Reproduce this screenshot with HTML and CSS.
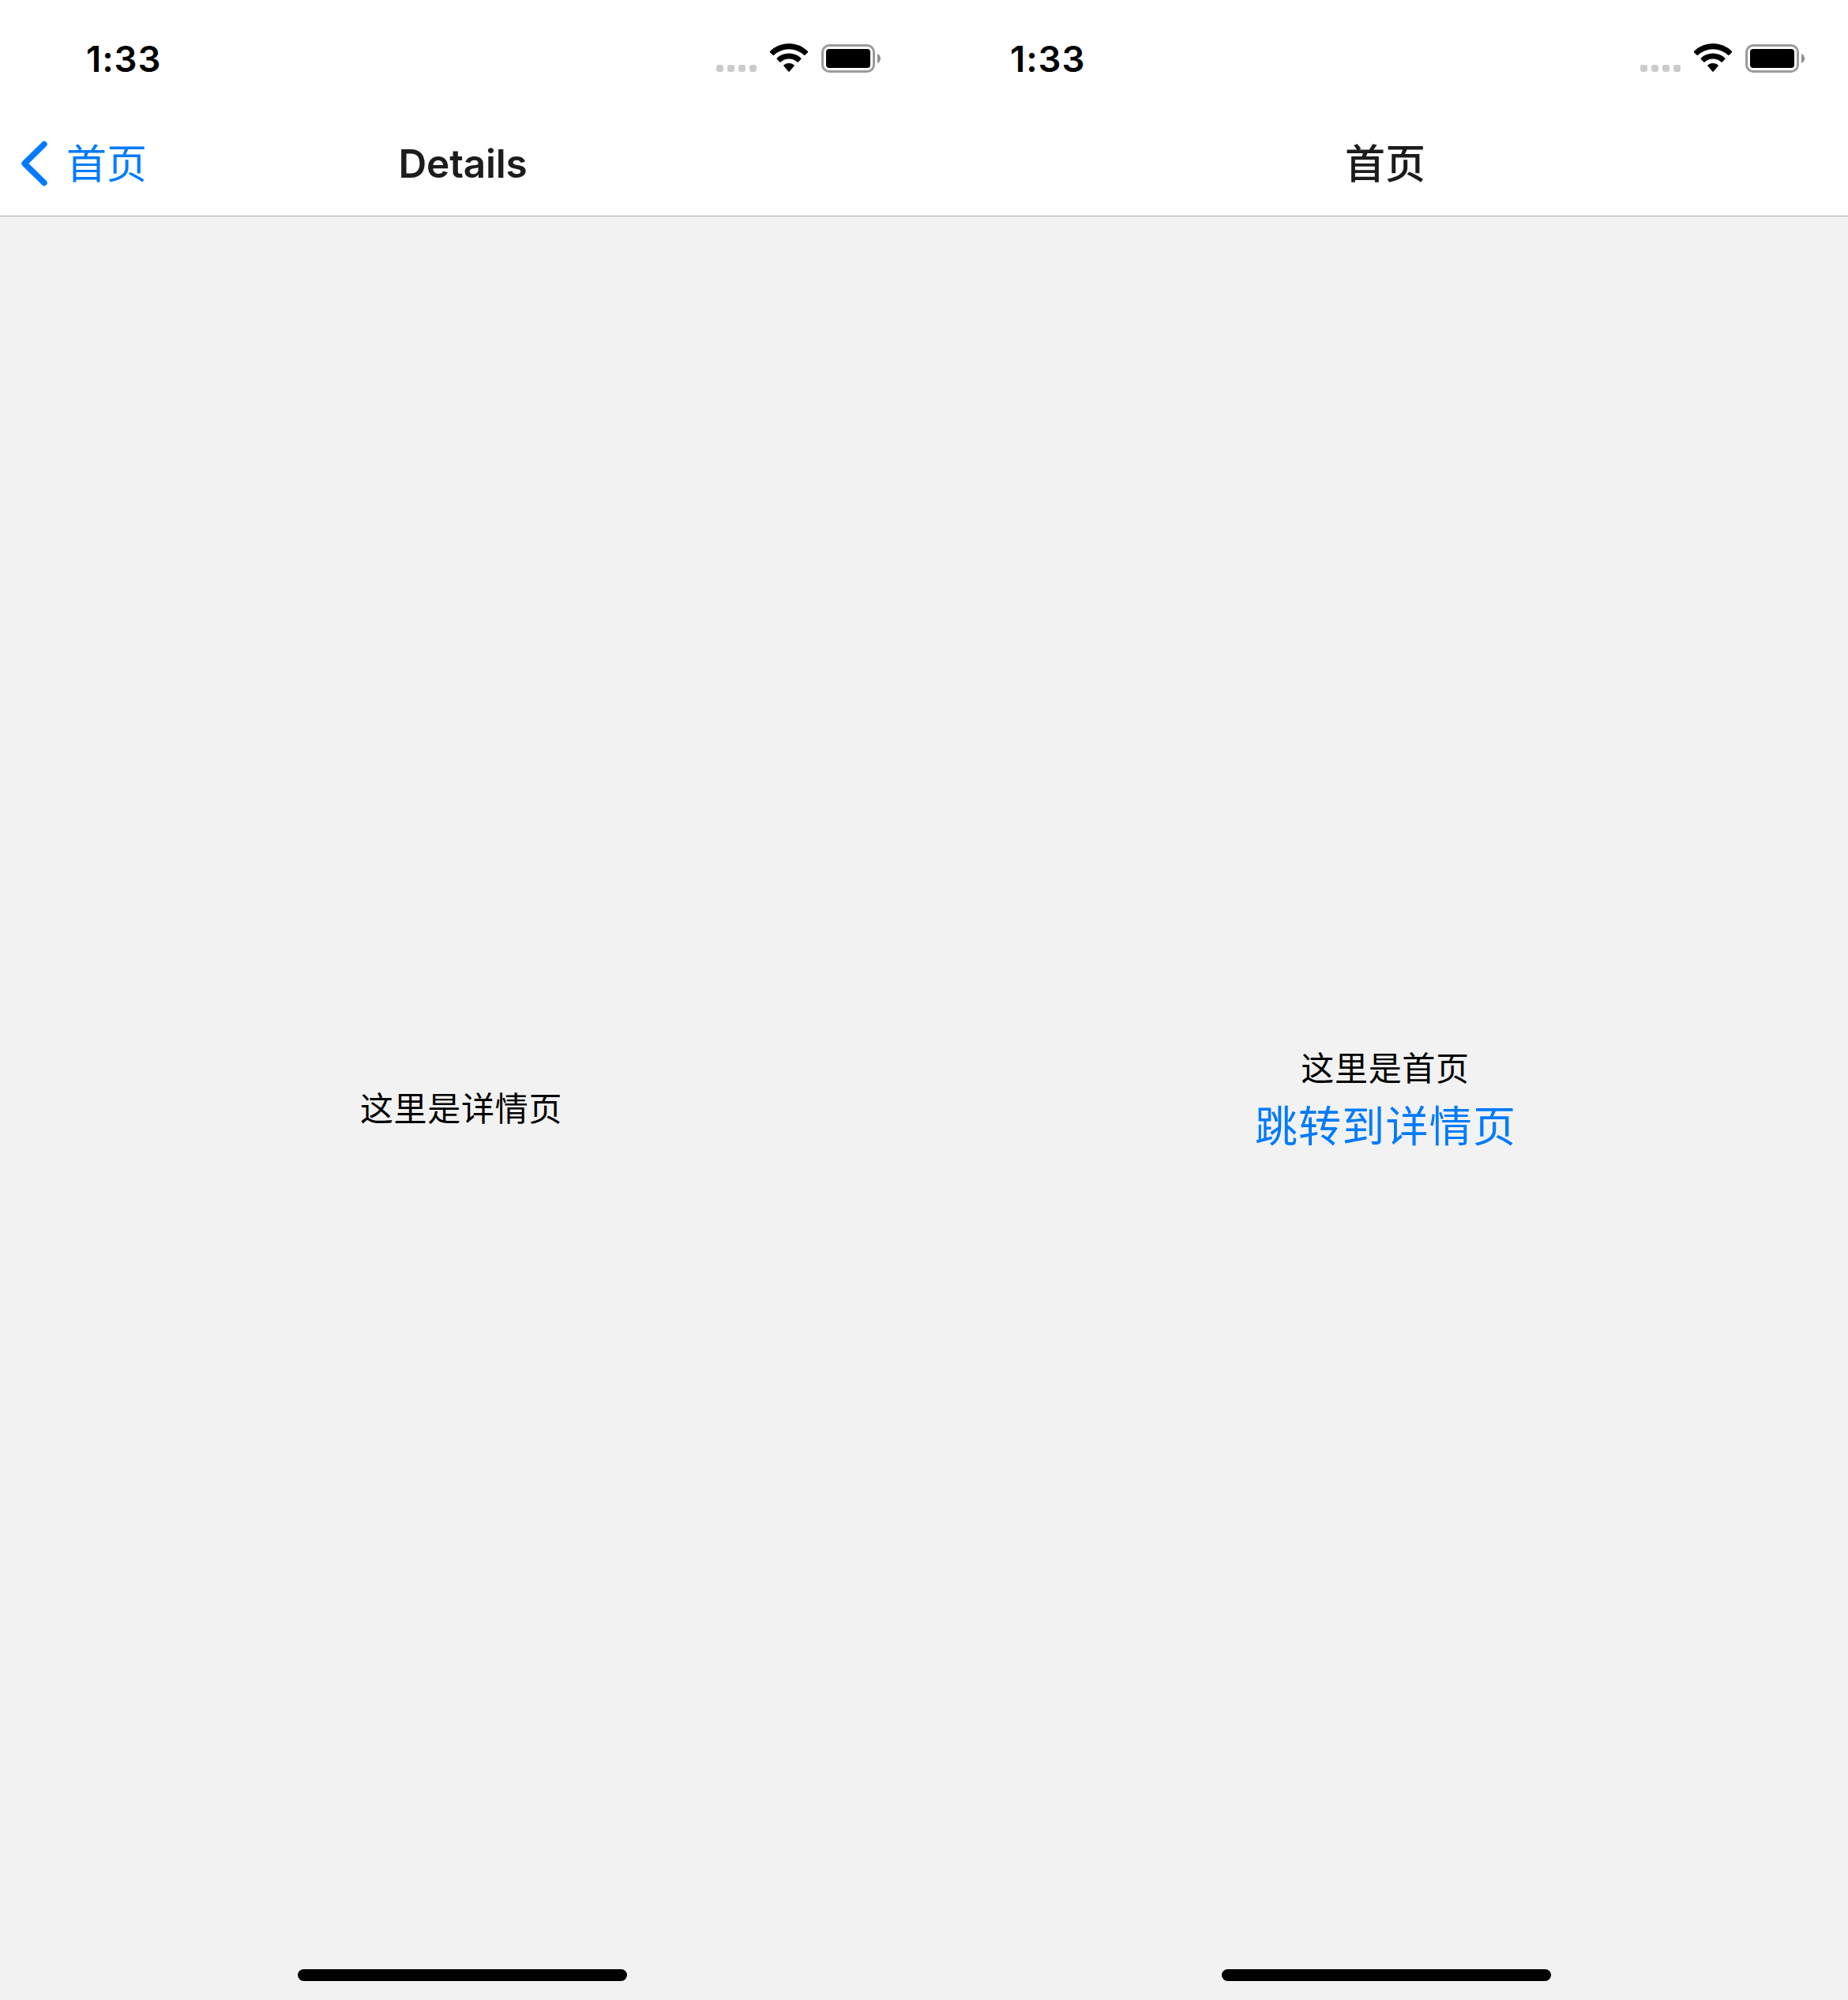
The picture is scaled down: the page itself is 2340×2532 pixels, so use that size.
FILE: index.html
```
<!DOCTYPE html>
<html lang="zh-CN">
<head>
<meta charset="utf-8">
<title>首页</title>
<link rel="stylesheet" href="styles.css">
</head>
<body>
<svg class="sprite" width="0" height="0">
  <symbol id="status" viewBox="0 0 210 40">
    <g fill="#cbcbcb">
      <rect x="1" y="28" width="9" height="9" rx="3.2"/>
      <rect x="15" y="28" width="9" height="9" rx="3.2"/>
      <rect x="29" y="28" width="9" height="9" rx="3.2"/>
      <rect x="43" y="28" width="9" height="9" rx="3.2"/>
    </g>
    <path d="M69.2 12.4Q68.4 11.6 69.2 10.8A34 34 0 0 1 116.8 10.8Q117.6 11.6 116.8 12.4L113.4 15.8Q112.7 16.4 112 15.8A28 28 0 0 0 74 15.8Q73.3 16.4 72.6 15.8Z"/>
    <path d="M77.8 21Q77 20.2 77.8 19.4A22.4 22.4 0 0 1 108.2 19.4Q109 20.2 108.2 21L104.8 24.5Q104.1 25.1 103.4 24.5A15.6 15.6 0 0 0 82.6 24.5Q81.9 25.1 81.2 24.5Z"/>
    <path d="M86.4 29.6Q85.7 28.9 86.5 28.2A10.6 10.6 0 0 1 99.5 28.2Q100.3 28.9 99.6 29.6L93.7 36.4Q93 37.1 92.3 36.4Z"/>
    <rect x="135.5" y="3.5" width="65" height="33" rx="8.5" fill="none" stroke="#9b9b9b" stroke-width="3"/>
    <rect x="140" y="8" width="56" height="24" rx="4"/>
    <path d="M205 14Q209 16 209 20T205 26Z" fill="#8e8e8e"/>
  </symbol>
</svg>
<main class="screens">
  <section class="screen">
    <header class="header">
      <div class="status-bar">
        <span class="time">1:33</span>
        <svg class="status-icons"><use href="#status"/></svg>
      </div>
      <nav class="nav-bar">
        <a class="back">
          <svg class="chevron" viewBox="0 0 34 58"><path d="M30 4.5L5 29L30 53.5" fill="none" stroke="#007aff" stroke-width="7.4" stroke-linecap="round" stroke-linejoin="round"/></svg>
          <span class="back-label">首页</span>
        </a>
        <h1 class="title title-latin">Details</h1>
        <span></span>
      </nav>
    </header>
    <div class="content">
      <p class="text">这里是详情页</p>
    </div>
    <div class="home-area"><div class="home-indicator"></div></div>
  </section>
  <section class="screen">
    <header class="header">
      <div class="status-bar">
        <span class="time">1:33</span>
        <svg class="status-icons"><use href="#status"/></svg>
      </div>
      <nav class="nav-bar">
        <span></span>
        <h1 class="title">首页</h1>
        <span></span>
      </nav>
    </header>
    <div class="content">
      <p class="text">这里是首页</p>
      <a class="button">跳转到详情页</a>
    </div>
    <div class="home-area"><div class="home-indicator"></div></div>
  </section>
</main>
</body>
</html>
```
FILE: styles.css
```
* { box-sizing: border-box; }

body {
  margin: 0;
  background: #f2f2f2;
  color: #000;
  font-family: Inter, "Noto Sans CJK SC", sans-serif;
}

.sprite { display: none; }

.screens {
  display: grid;
  grid-template-columns: 1170px 1170px;
  height: 2532px;
}

.screen {
  display: grid;
  grid-template-rows: 274px 1fr 39px;
  height: 2532px;
}

.header {
  background: #fff;
  border-bottom: 1px solid #a9a9a9;
}

.status-bar {
  display: flex;
  justify-content: space-between;
  height: 141px;
  padding: 54px 54px 0 109px;
}

.time {
  height: 44px;
  font-size: 45.5px;
  font-weight: 600;
  letter-spacing: 0.9px;
  line-height: 42px;
}

.status-icons {
  width: 210px;
  height: 40px;
}

.nav-bar {
  display: grid;
  grid-template-columns: 1fr auto 1fr;
  align-items: center;
  height: 132px;
}

.back {
  display: flex;
  align-items: center;
  padding-left: 26px;
  gap: 24px;
  color: #007aff;
}

.chevron {
  width: 34px;
  height: 58px;
}

.back-label {
  padding-bottom: 6px;
  font-family: "Noto Sans CJK SC", sans-serif;
  font-size: 51px;
  line-height: 60px;
}

.title {
  margin: 0;
  padding: 0 2px 6px 0;
  color: #1c1c1e;
  font-family: "Noto Sans CJK SC", sans-serif;
  font-size: 51px;
  font-weight: 500;
  line-height: 60px;
}

.title-latin {
  padding: 0 0 0 2px;
  font-family: Inter, sans-serif;
  font-size: 49.5px;
  font-weight: 600;
  letter-spacing: -0.2px;
}

.content {
  display: flex;
  flex-direction: column;
  align-items: center;
  justify-content: center;
  padding: 34px 2px 0 0;
  font-family: "Noto Sans CJK SC", sans-serif;
}

.text {
  margin: 0;
  font-size: 42px;
  letter-spacing: 0.7px;
  line-height: 50px;
}

.button {
  padding: 15px 0 21px 1px;
  color: #007aff;
  font-size: 54px;
  letter-spacing: 1.2px;
  line-height: 66px;
}

.home-area {
  display: flex;
  justify-content: center;
}

.home-indicator {
  width: 417px;
  height: 15px;
  margin-left: 1px;
  border-radius: 8px;
  background: #000;
}
```
